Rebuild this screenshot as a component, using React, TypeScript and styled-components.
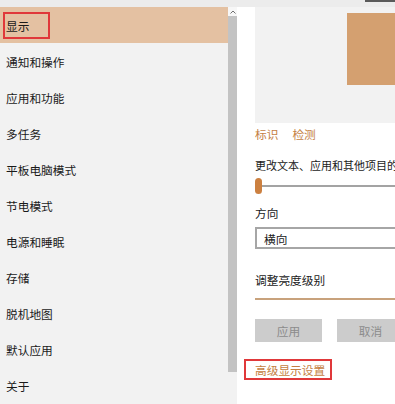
import React from "react";
import styled, { createGlobalStyle } from "styled-components";

const GlobalStyle = createGlobalStyle`
  html, body {
    margin: 0;
    padding: 0;
    background: #ffffff;
  }
  body {
    font-family: "Noto Sans CJK SC", "Noto Sans", sans-serif;
    -webkit-font-smoothing: antialiased;
  }
`;

const navItems = [
  "显示",
  "通知和操作",
  "应用和功能",
  "多任务",
  "平板电脑模式",
  "节电模式",
  "电源和睡眠",
  "存储",
  "脱机地图",
  "默认应用",
  "关于",
];

const Page = styled.div`
  width: 395px;
  height: 404px;
  overflow: hidden;
  display: flex;
  flex-direction: column;
  background: #ffffff;
`;

const TopStrip = styled.div`
  height: 7px;
  flex-shrink: 0;
  background: #ececec;
  display: flex;
  justify-content: flex-end;
`;

const WindowEdge = styled.div`
  width: 30px;
  height: 2px;
  background: #5a5a5a;
`;

const Main = styled.div`
  flex: 1;
  display: flex;
  min-height: 0;
`;

const Nav = styled.nav`
  width: 228px;
  flex-shrink: 0;
  background: #f2f2f2;
  display: flex;
  flex-direction: column;
`;

const NavItem = styled.div<{ $active?: boolean }>`
  height: 36px;
  flex-shrink: 0;
  padding-left: 6px;
  display: flex;
  align-items: center;
  font-size: 11.7px;
  color: #1a1a1a;
  background: ${(p) => (p.$active ? "#e4c1a2" : "transparent")};
`;

const Marked = styled.span`
  display: inline-flex;
  align-items: center;
  height: 27px;
  box-sizing: border-box;
  margin-left: -3px;
  padding: 0 19px 0 1px;
  border: 2px solid #e0383a;
`;

const ScrollBar = styled.div`
  width: 9px;
  flex-shrink: 0;
  display: flex;
  flex-direction: column;
  background: #f2f2f2;
`;

const ScrollArrow = styled.div`
  height: 9px;
  background: #f7f7f7;
  display: flex;
  align-items: center;
  justify-content: center;
`;

const ScrollThumb = styled.div`
  height: 356px;
  background: #c3c3c3;
`;

const Content = styled.section`
  flex: 1;
  min-width: 0;
  overflow: hidden;
  padding-left: 18px;
  display: flex;
  flex-direction: column;
  align-items: flex-start;
  font-size: 11.7px;
  color: #1a1a1a;
`;

const Preview = styled.div`
  align-self: stretch;
  height: 116px;
  flex-shrink: 0;
  background: #f2f2f2;
  padding: 6px 0 0 92px;
  box-sizing: border-box;
`;

const Monitor = styled.div`
  width: 80px;
  height: 72px;
  background: #d4a070;
`;

const LinkRow = styled.div`
  margin-top: 3px;
  display: flex;
  gap: 14px;
  line-height: 16px;
  color: #c47e42;
`;

const Label = styled.div<{ $top: number; $size?: number }>`
  margin-top: ${(p) => p.$top}px;
  line-height: 16px;
  white-space: nowrap;
  ${(p) => (p.$size ? `font-size: ${p.$size}px;` : "")}
`;

const Slider = styled.div`
  margin-top: 5px;
  align-self: stretch;
  height: 16px;
  display: flex;
  align-items: center;
`;

const Thumb = styled.div`
  width: 7px;
  height: 16px;
  border-radius: 4px;
  background: #cc8040;
  flex-shrink: 0;
`;

const Track = styled.div`
  flex: 1;
  height: 2px;
  background: #a3a3a3;
`;

const Select = styled.div`
  margin-top: 6px;
  align-self: stretch;
  margin-right: -20px;
  height: 22px;
  box-sizing: border-box;
  border: 2px solid #a6a6a6;
  padding-left: 7px;
  display: flex;
  align-items: center;
`;

const Line = styled.div`
  margin-top: 10px;
  align-self: stretch;
  height: 2px;
  background: #c8a27c;
`;

const Buttons = styled.div`
  margin-top: 19px;
  display: flex;
  gap: 15px;
`;

const Button = styled.div`
  width: 67px;
  height: 23px;
  flex-shrink: 0;
  background: #cccccc;
  color: #8b8b8b;
  display: flex;
  align-items: center;
  justify-content: center;
`;

const Advanced = styled.div`
  margin-top: 17px;
  margin-left: -11px;
  height: 21px;
  box-sizing: border-box;
  border: 2px solid #e0383a;
  padding: 0 5px 0 9px;
  display: flex;
  align-items: center;
  color: #c47e42;
`;

export default function App() {
  return (
    <>
      <GlobalStyle />
      <Page>
        <TopStrip>
          <WindowEdge />
        </TopStrip>
        <Main>
          <Nav>
            {navItems.map((item, i) => (
              <NavItem key={item} $active={i === 0}>
                {i === 0 ? <Marked>{item}</Marked> : item}
              </NavItem>
            ))}
          </Nav>
          <ScrollBar>
            <ScrollArrow>
              <svg width="6" height="4" viewBox="0 0 6 4">
                <path d="M0.5 3.5 L3 1 L5.5 3.5" fill="none" stroke="#707070" strokeWidth="1" />
              </svg>
            </ScrollArrow>
            <ScrollThumb />
          </ScrollBar>
          <Content>
            <Preview>
              <Monitor />
            </Preview>
            <LinkRow>
              <span>标识</span>
              <span>检测</span>
            </LinkRow>
            <Label $top={15} $size={11}>更改文本、应用和其他项目的大小: 100%(推荐)</Label>
            <Slider>
              <Thumb />
              <Track />
            </Slider>
            <Label $top={11}>方向</Label>
            <Select>横向</Select>
            <Label $top={23}>调整亮度级别</Label>
            <Line />
            <Buttons>
              <Button>应用</Button>
              <Button>取消</Button>
            </Buttons>
            <Advanced>高级显示设置</Advanced>
          </Content>
        </Main>
      </Page>
    </>
  );
}
